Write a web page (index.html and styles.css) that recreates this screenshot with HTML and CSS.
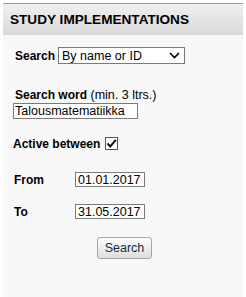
FILE: index.html
```html
<!DOCTYPE html>
<html>
<head>
<meta charset="utf-8">
<link rel="stylesheet" href="styles.css">
</head>
<body>
<div class="panel">
  <div class="header">STUDY IMPLEMENTATIONS</div>
  <div class="content">
    <div class="row search-row">
      <span class="label">Search</span>
      <span class="select-wrap">
        <select class="select"><option>By name or ID</option></select>
        <svg class="chevron" width="11" height="7" viewBox="0 0 11 7"><path d="M1 1 L5.5 5.5 L10 1" fill="none" stroke="#000" stroke-width="1.6"/></svg>
      </span>
    </div>
    <div class="word-label"><span class="label">Search word</span> <span class="hint">(min. 3 ltrs.)</span></div>
    <input class="text word" type="text" value="Talousmatematiikka">
    <div class="row active-row">
      <span class="label">Active between</span>
      <span class="check"><svg width="11" height="11" viewBox="0 0 11 11"><path d="M1.5 5.5 L4.3 8.5 L9.8 1.8" fill="none" stroke="#111" stroke-width="2"/></svg></span>
    </div>
    <div class="row date-row from-row">
      <span class="label date-label">From</span>
      <input class="text date" type="text" value="01.01.2017">
    </div>
    <div class="row date-row to-row">
      <span class="label date-label">To</span>
      <input class="text date" type="text" value="31.05.2017">
    </div>
    <div class="btn-row"><button class="btn">Search</button></div>
  </div>
</div>
</body>
</html>
```
FILE: styles.css
```css
html, body {
  margin: 0;
  padding: 0;
  background: #ffffff;
  font-family: "Liberation Sans", Arial, sans-serif;
  color: #000;
}
.panel {
  margin: 3px 3px 0 3px;
  border-top: 1px solid #9a9a9a;
  background: #f8f8f8;
  height: 294px;
}
.header {
  height: 31px;
  line-height: 31px;
  padding-left: 7px;
  font-weight: bold;
  font-size: 13.6px;
  background: linear-gradient(#f0f0f0, #d8d8d8);
  color: #000;
}
.content {
  padding: 12px 0 0 12px;
}
.row {
  display: flex;
  align-items: center;
}
.label {
  font-weight: bold;
  font-size: 12px;
}
.search-row {
  height: 17px;
}
.search-row .label {
  margin-right: 3px;
}
.select-wrap {
  position: relative;
  display: inline-block;
}
.select {
  -webkit-appearance: none;
  appearance: none;
  width: 127px;
  height: 17px;
  border: 1px solid #7a7a7a;
  border-radius: 0;
  background: #fff;
  font-family: "Liberation Sans", Arial, sans-serif;
  font-size: 12.5px;
  padding: 0 0 0 3px;
  margin: 0;
  color: #000;
  display: block;
}
.chevron {
  position: absolute;
  right: 5px;
  top: 5px;
}
.word-label {
  margin-top: 24px;
  font-size: 12.5px;
  line-height: 14px;
}
.hint {
  font-size: 12.5px;
}
.text {
  border: 1px solid #7a7a7a;
  background: #fff;
  font-family: "Liberation Sans", Arial, sans-serif;
  font-size: 12.5px;
  padding: 0 0 0 1px;
  margin: 0;
  color: #000;
  box-sizing: border-box;
  display: block;
  outline: none;
}
.word {
  width: 125px;
  height: 16px;
  margin-left: -2px;
  margin-top: 1px;
}
.active-row {
  margin-top: 18px;
  height: 13px;
  margin-left: -2px;
}
.check {
  width: 11px;
  height: 11px;
  border: 1px solid #555;
  background: #fff;
  margin-left: 5px;
  display: inline-flex;
}
.date-row {
  margin-left: -1px;
}
.from-row {
  margin-top: 22px;
}
.to-row {
  margin-top: 17px;
}
.date-label {
  width: 61px;
}
.date {
  width: 70px;
  height: 15px;
  padding-left: 2px;
}
.btn-row {
  margin-top: 18px;
  padding-left: 82px;
}
.btn {
  width: 55px;
  height: 22px;
  border: 1px solid #a5a5a5;
  border-radius: 3px;
  background: linear-gradient(#fdfdfd, #dedede);
  font-family: "Liberation Sans", Arial, sans-serif;
  font-size: 12.5px;
  color: #1a2a44;
  padding: 0;
  margin: 0;
}
```
